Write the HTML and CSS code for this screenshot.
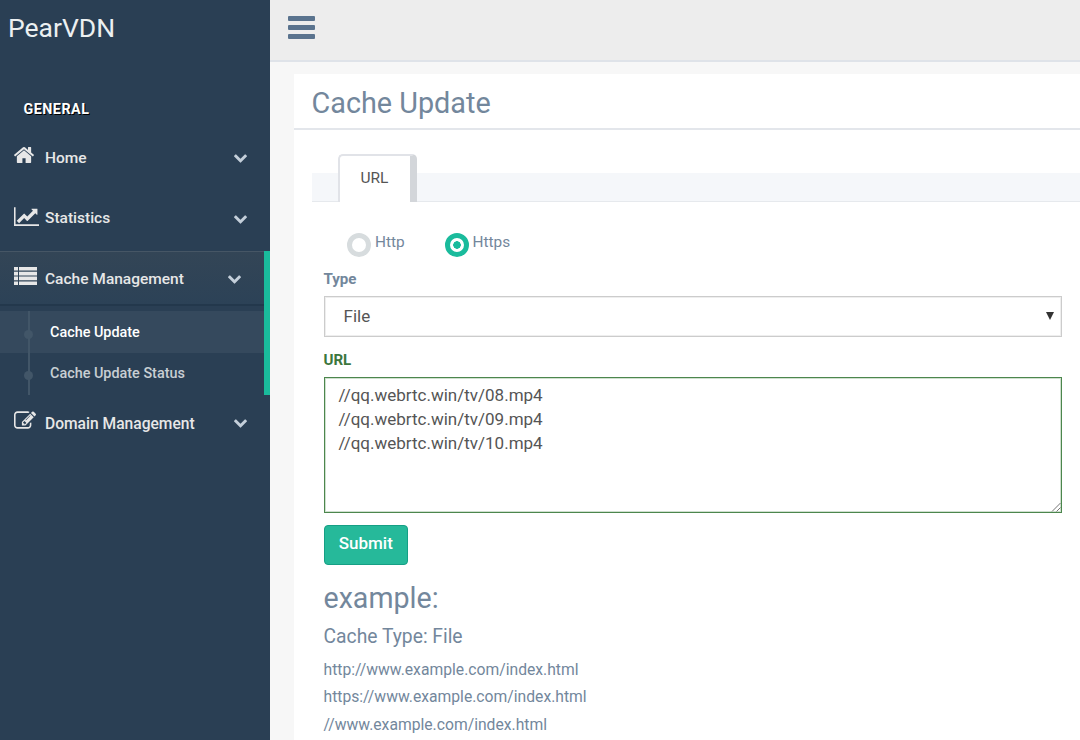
FILE: index.html
```html
<!DOCTYPE html>
<html lang="en">
<head>
<meta charset="utf-8">
<title>PearVDN</title>
<link rel="stylesheet" href="styles.css">
</head>
<body>
<svg class="defs" aria-hidden="true">
  <symbol id="chevron" viewBox="90 533 1612 1035"><path d="M1683 808l-742 741q-19 19-45 19t-45-19l-742-741q-19-19-19-45.5t19-45.5l166-165q19-19 45-19t45 19l531 531 531-531q19-19 45-19t45 19l166 165q19 19 19 45.5t-19 45.5z"/></symbol>
</svg>
<div class="app">
  <aside class="sidebar">
    <div class="brand">PearVDN</div>
    <h3 class="section">GENERAL</h3>
    <nav class="menu">
      <a class="item"><span class="icon"><svg class="home" viewBox="89 253 1614 1283"><path d="M1472 992v480q0 26-19 45t-45 19h-384v-384h-256v384h-384q-26 0-45-19t-19-45v-480q0-1 .5-3t.5-3l575-474 575 474q1 2 1 6zm223-69l-62 74q-8 9-21 11h-3q-13 0-21-7l-692-577-692 577q-12 8-24 7-13-2-21-11l-62-74q-8-10-7-23.5t11-21.5l719-599q32-26 76-26t76 26l244 204v-195q0-14 9-23t23-9h192q14 0 23 9t9 23v408l219 182q10 8 11 21.5t-7 23.5z"/></svg></span><span class="label">Home</span><svg class="chevron"><use href="#chevron"/></svg></a>
      <a class="item stats"><span class="icon"><svg class="chart" viewBox="0 128 2048 1536"><path d="M2048 1536v128h-2048v-1536h128v1408h1920zm-128-1248v435q0 21-19.5 29.5t-35.5-7.5l-121-121-633 633q-10 10-23 10t-23-10l-233-233-416 416-192-192 585-585q10-10 23-10t23 10l233 233 464-464-121-121q-16-16-7.5-35.5t29.5-19.5h435q14 0 23 9t9 23z"/></svg></span><span class="label">Statistics</span><svg class="chevron"><use href="#chevron"/></svg></a>
      <div class="group">
        <a class="item active"><span class="icon"><svg class="list" viewBox="0 0 23 18"><path d="M0 0h4v3.600H0zM5 0h18v3.600H5zM0 4.800h4v3.600H0zM5 4.800h18v3.600H5zM0 9.600h4v3.600H0zM5 9.600h18v3.600H5zM0 14.400h4V18H0zM5 14.400h18V18H5z"/></svg></span><span class="label">Cache Management</span><svg class="chevron"><use href="#chevron"/></svg></a>
        <div class="submenu">
          <a class="sub current">Cache Update</a>
          <a class="sub">Cache Update Status</a>
        </div>
      </div>
      <a class="item last"><span class="icon"><svg class="edit" viewBox="0 128 1784 1408"><path d="M888 1184l116-116-152-152-116 116v56h96v96h56zm440-720q-16-16-33 1l-350 350q-17 17-1 33t33-1l350-350q17-17 1-33zm80 594v190q0 119-84.5 203.5t-203.5 84.5h-832q-119 0-203.5-84.5t-84.5-203.5v-832q0-119 84.5-203.5t203.5-84.5h832q63 0 117 25 15 7 18 23 3 17-9 29l-49 49q-14 14-32 8-23-6-45-6h-832q-66 0-113 47t-47 113v832q0 66 47 113t113 47h832q66 0 113-47t47-113v-126q0-13 9-22l64-64q15-15 35-7t20 29zm-96-738l288 288-672 672h-288v-288zm444 132l-92 92-288-288 92-92q28-28 68-28t68 28l152 152q28 28 28 68t-28 68z"/></svg></span><span class="label">Domain Management</span><svg class="chevron"><use href="#chevron"/></svg></a>
    </nav>
  </aside>
  <div class="page">
    <header class="topbar"><svg class="bars" viewBox="0 0 27 23"><rect width="27" height="5" rx="1"/><rect y="9" width="27" height="5" rx="1"/><rect y="18" width="27" height="5" rx="1"/></svg></header>
    <main class="panel">
      <h2 class="title">Cache Update</h2>
      <div class="tabs"><div class="tab">URL</div></div>
      <form class="form">
        <div class="radios">
          <label class="radio"><span class="dot"></span><span>Http</span></label>
          <label class="radio on"><span class="dot"></span><span>Https</span></label>
        </div>
        <div class="field-label">Type</div>
        <div class="select"><span>File</span><svg class="arrow" viewBox="0 0 8 8"><path d="M0 0h8L4 8z"/></svg></div>
        <div class="field-label valid">URL</div>
        <div class="textarea">//qq.webrtc.win/tv/08.mp4<br>//qq.webrtc.win/tv/09.mp4<br>//qq.webrtc.win/tv/10.mp4<svg class="grip" viewBox="0 0 10 10"><path d="M1 9.500L9.500 1M5.500 9.500l4-4"/></svg></div>
        <button class="submit" type="button">Submit</button>
        <h3 class="example">example:</h3>
        <h4 class="kind">Cache Type: File</h4>
        <p class="line">http://www.example.com/index.html</p>
        <p class="line">https://www.example.com/index.html</p>
        <p class="line">//www.example.com/index.html</p>
      </form>
    </main>
  </div>
</div>
</body>
</html>
```
FILE: styles.css
```css
* { box-sizing: border-box; }
body { margin: 0; font-family: Roboto, "Liberation Sans", sans-serif; font-size: 15.5px; color: #73879c; background: #f7f7f7; overflow: hidden; }
h2, h3, h4, p { margin: 0; font-weight: 400; }
.defs { position: absolute; width: 0; height: 0; }
.app { display: flex; height: 740px; }
.sidebar { width: 270px; flex: none; background: #2a3f54; color: #e7e7e7; overflow: hidden; }
.brand { height: 56px; padding-left: 8px; line-height: 55px; font-size: 26.5px; color: #ecf0f1; }
.section { margin-top: 42px; padding-left: 23.5px; height: 22px; line-height: 22px; font-size: 14.3px; letter-spacing: .5px; font-weight: 700; color: #fff; text-shadow: 1px 1px #000; }
.menu { display: flex; flex-direction: column; padding-top: 10px; }
.item { display: flex; align-items: center; height: 54px; margin-bottom: 7px; padding: 0 23px 0 14px; font-weight: 500; }
.icon { width: 31px; height: 24px; display: flex; align-items: center; margin-top: -4px; }
.icon svg { fill: #e7e7e7; display: block; }
.home { width: 20px; height: 16px; }
.chart { width: 25px; height: 19px; }
.list { width: 23px; height: 18px; }
.edit { width: 22px; height: 18px; }
.label { flex: 1; white-space: nowrap; padding-top: 2px; }
.stats .label { padding-top: 0; }
.chevron { width: 13px; height: 9px; fill: #c4cfda; margin-top: 3px; }
.group { border-right: 6px solid #1abb9c; height: 144px; margin-top: -1px; }
.item.active { margin: 0; height: 55px; background: linear-gradient(#334556, #2c4257); border-top: 1px solid #465665; border-bottom: 2px solid #23384c; }
.submenu { padding-top: 5px; }
.sub { display: flex; align-items: center; height: 42px; padding: 0 0 1px 50px; position: relative; font-size: 14.4px; font-weight: 500; color: rgba(255,255,255,.75); }
.sub::before { content: ""; position: absolute; left: 24px; top: 18px; width: 9px; height: 9px; border-radius: 50%; background: #425668; }
.sub::after { content: ""; position: absolute; left: 28px; top: 0; bottom: 0; width: 1.5px; background: #425668; }
.current { background: #35495d; color: #fff; padding-bottom: 0; }
.current::before { top: 19px; }
.item.last { margin-top: 0; font-size: 15.6px; }
.last .label { padding-top: 3px; }
.page { flex: 1; min-width: 0; display: flex; flex-direction: column; }
.topbar { height: 62px; flex: none; background: #ededed; border-bottom: 2px solid #dfe3e9; padding: 16px 0 0 18px; }
.bars { display: block; width: 27px; height: 23px; fill: #5a738e; }
.panel { flex: 1; margin: 12px 0 0 24px; background: #fff; }
.title { height: 56px; line-height: 58px; padding-left: 17.5px; border-bottom: 2px solid #e3e6eb; font-size: 28.8px; }
.tabs { margin: 43px 0 0 18px; height: 29px; background: #f5f7fa; border-bottom: 1px solid #e6e9ed; display: flex; align-items: flex-end; padding-left: 26px; }
.tab { width: 79px; height: 48px; margin-bottom: -1px; border: 2px solid #e1e3e8; border-right: 7px solid #d3d6da; border-bottom: 0; border-radius: 5px 5px 0 0; background: #fff; color: #555; line-height: 45px; padding-left: 20.5px; }
.form { padding: 29px 18px 0 29.5px; display: flex; flex-direction: column; }
.radios { display: flex; height: 37px; padding-left: 23.5px; }
.radio { display: flex; align-items: flex-start; gap: 4px; width: 97.5px; line-height: 23px; font-size: 15.4px; }
.dot { width: 24px; height: 24px; margin-top: 2px; flex: none; border: 5px solid #d7dcde; border-radius: 50%; background: #fff; }
.on .dot { border-color: #1abb9c; background: radial-gradient(circle, #1abb9c 3.5px, #fff 4px); }
.field-label { height: 28px; line-height: 22px; font-weight: 700; font-size: 15.1px; }
.field-label.valid { color: #3c763d; margin-top: 12px; height: 28px; }
.select { height: 41px; border: 1.5px solid #ccc; box-shadow: inset 0 0 0 1px #eee; padding: 0 7px 2px 19px; display: flex; align-items: center; justify-content: space-between; font-size: 17px; color: #555; }
.arrow { width: 8px; height: 8px; fill: #333; }
.textarea { position: relative; height: 136px; border: 1px solid #4c864d; box-shadow: inset 0 0 0 1px #cfe0cf; padding: 6px 14px; font-size: 17px; line-height: 23.9px; color: #555; }
.grip { position: absolute; right: 0; bottom: 0; width: 10px; height: 10px; stroke: #777; fill: none; }
.submit { width: 84.500px; height: 40px; margin: 12px 0 1px; padding: 0 0 4px; border: 1px solid #169f85; border-radius: 4px; background: #26b99a; color: #fff; font: 500 17px Roboto, "Liberation Sans", sans-serif; }
.example { margin-top: 12px; height: 40px; line-height: 41px; font-size: 28.6px; }
.kind { margin-top: 6px; height: 24px; line-height: 25px; font-size: 19.3px; }
.line { height: 27.3px; line-height: 27px; font-size: 15.7px; }
.kind + .line { margin-top: 8px; }
```
